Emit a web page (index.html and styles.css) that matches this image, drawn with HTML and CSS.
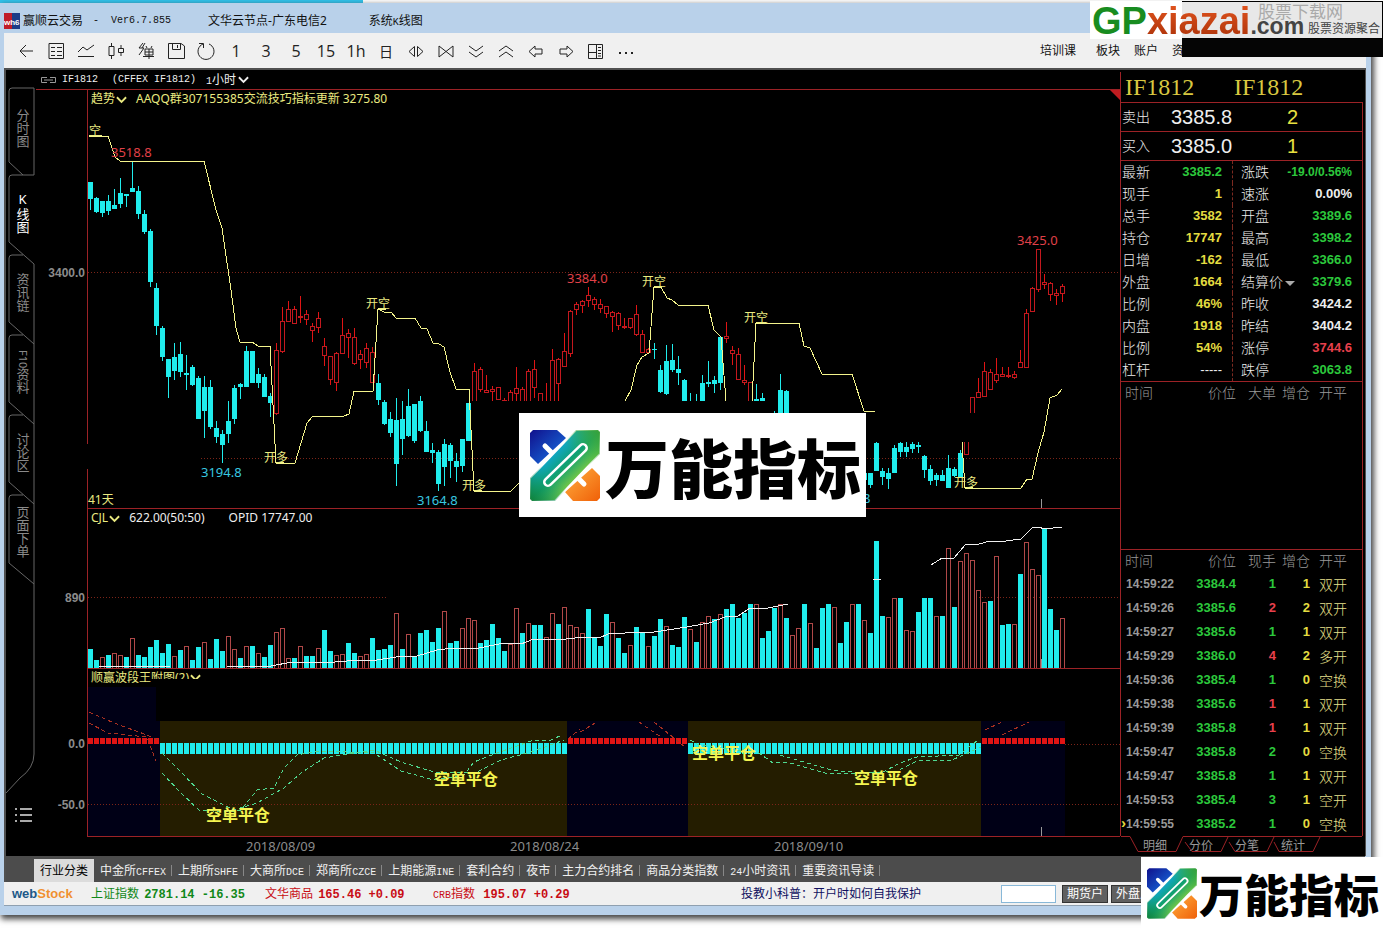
FILE: index.html
```html
<!DOCTYPE html>
<html lang="zh-CN">

<head>
    <meta charset="utf-8" />
    <title>赢顺云交易</title>
    <link rel="stylesheet" href="styles.css">
</head>

<body>
    <svg class="defs" width="0" height="0">
        <defs>
            <linearGradient id="gBlue" x1="0" y1="0" x2="1" y2="1">
                <stop offset="0" stop-color="#10108c" />
                <stop offset="1" stop-color="#1878e8" />
            </linearGradient>
            <linearGradient id="gBand" gradientUnits="userSpaceOnUse" x1="20" y1="20" x2="54" y2="54">
                <stop offset="0" stop-color="#10a8e0" />
                <stop offset=".45" stop-color="#10a070" />
                <stop offset="1" stop-color="#a8dc30" />
            </linearGradient>
            <linearGradient id="gBand2" gradientUnits="userSpaceOnUse" x1="0" y1="71" x2="70" y2="0">
                <stop offset="0" stop-color="#108038" />
                <stop offset=".35" stop-color="#10a070" stop-opacity="0" />
                <stop offset=".65" stop-color="#40b840" stop-opacity="0" />
                <stop offset="1" stop-color="#38a038" />
            </linearGradient>
            <linearGradient id="gOrange" x1="0" y1="0" x2="1" y2="1">
                <stop offset="0" stop-color="#ffb040" />
                <stop offset="1" stop-color="#f06008" />
            </linearGradient>
            <symbol id="logo" viewBox="0 0 70 71">
                <path fill="url(#gBlue)" d="M0 3 3 0H27L36 8 8 34 0 26Z" />
                <path stroke="#fff" stroke-width="5" stroke-linecap="round" d="M15 16 25 26" />
                <path fill="url(#gOrange)" d="M62 38 70 46V68L67 71H43L35 62Z" />
                <path stroke="#fff" stroke-width="5" stroke-linecap="round" d="M46 46 54 54" />
                <path fill="url(#gBand)" stroke="#fff" stroke-width="2" d="M46 0H68L70 2V24L25 71H2L0 69V48Z" />
                <path fill="url(#gBand2)" d="M46 0H68L70 2V24L25 71H2L0 69V48Z" />
                <path stroke="#fff" stroke-width="10" stroke-linecap="round" d="M18 52 53 18" />
                <path stroke="url(#gBand)" stroke-width="5" stroke-linecap="round" d="M18 52 53 18" />
            </symbol>
            <symbol id="down" viewBox="0 0 12 8">
                <path fill="none" stroke="currentColor" stroke-width="2" d="M1 1 6 6 11 1" />
            </symbol>
        </defs>
    </svg>

    <div class="window">
        <header class="titlebar">
            <svg class="app-icon" width="16" height="16">
                <rect width="9" height="16" fill="#c01c28" />
                <rect x="8" width="8" height="16" fill="#1c3c88" />
                <text x="0" y="12">wh6</text>
            </svg>
            <span class="t-name">赢顺云交易</span>
            <span class="t-ver en">-  Ver6.7.855</span>
            <span class="t-node">文华云节点-广东电信2</span>
            <span>系统<i class="en">K</i>线图</span>
        </header>

        <nav class="toolbar">
            <button aria-label="返回"><svg><path d="M17 10H4M10 4 4 10 10 16" /></svg></button>
            <button aria-label="报价"><svg><path d="M3 2.500H17.500V17.500H3ZM5 6.500H9M11 6.500H16M5 10.500H9M11 10.500H16M5 14.500H9M11 14.500H16" /></svg></button>
            <button aria-label="分时"><svg><path d="M2 11 7 6 11 9 18 4M2 15.500H18" /></svg></button>
            <button aria-label="K线"><svg><path d="M3 5.500H8V14.500H3ZM5.500 2V5M5.500 15V18M12.500 7.500H17.500V11.500H12.500ZM15 4V7M15 12V15" /></svg></button>
            <button aria-label="闪电下单"><svg><path d="M7 2 3 7H8L3 14M9 2 6 7M9 8H17V14H9ZM9 11H17M13 8V18M7 15.500H18M10 5 11 7M16 5 15 7" /></svg></button>
            <button aria-label="保存"><svg><path d="M2.500 2.500H15L18.500 5V17.500H2.500ZM6.500 3V8.500H14.500V3M11.500 4V7" /></svg></button>
            <button aria-label="刷新"><svg><path d="M7 3A8 8 0 1 0 13 3M3 2.500H7.500V7" /></svg></button>
            <button>1</button>
            <button>3</button>
            <button>5</button>
            <button>15</button>
            <button>1h</button>
            <button class="cn">日</button>
            <button aria-label="放大"><svg><path d="M8.500 5.500V15.500L3 10.500ZM11.500 5.500V15.500L17 10.500Z" /></svg></button>
            <button aria-label="缩小"><svg><path d="M3 5V16L10 10.500ZM17 5V16L10 10.500Z" /></svg></button>
            <button aria-label="下"><svg><path d="M3 5 10 10 17 5M3 11 10 16 17 11" /></svg></button>
            <button aria-label="上"><svg><path d="M3 10 10 5 17 10M3 16 10 11 17 16" /></svg></button>
            <button aria-label="左移"><svg><path d="M3 10.500 9 5V8H16V13H9V16Z" /></svg></button>
            <button aria-label="右移"><svg><path d="M17 10.500 11 5V8H4V13H11V16Z" /></svg></button>
            <button aria-label="布局"><svg><path d="M2.500 3.500H16.500V17.500H2.500ZM10.500 4V17M3 11.500H10M12 6.500H15M12 9.500H15M12 12.500H15M12 15H15" /></svg></button>
            <button aria-label="更多"><svg class="dots"><path d="M3 12H5M9 12H11M15 12H17" /></svg></button>
            <div class="menu">
                <a href="#" class="first">培训课</a>
                <a href="#">板块</a>
                <a href="#">账户</a>
                <a href="#">资讯</a>
            </div>
        </nav>

        <main class="work">
            <aside class="side">
                <svg class="side-lines" width="30" height="786">
                    <path d="M3 92V21Q3 18 6 18H28V105H17L3 92M3 172V108Q3 105 6 105H17M3 172 28 194V684Q28 698 14 708L0 723" />
                    <path d="M3 252V188Q3 185 6 185H17M3 252 28 274M3 332V268Q3 265 6 265H17M3 332 28 354M3 412V348Q3 345 6 345H17M3 412 28 434M3 493V428Q3 425 6 425H17M3 493 28 514" />
                    <path class="list" d="M9 739H11M14 739H26M9 745H11M14 745H26M9 751H11M14 751H26" />
                </svg>
                <button class="side-tab top">分时图</button>
                <button class="side-tab on">K线图</button>
                <button class="side-tab">资讯链</button>
                <button class="side-tab"><i>F10</i>资料</button>
                <button class="side-tab">讨论区</button>
                <button class="side-tab">页面下单</button>
            </aside>

            <section class="charts">
                <div class="contract">
                    <svg width="17" height="8"><path d="M7 1.500H1.500V6.500H7M10 1.500H15.500V6.500H10M4 4H13" /></svg>
                    <span class="en">IF1812</span>
                    <span class="en full">(CFFEX IF1812)</span>
                    <span><i class="en">1</i>小时</span>
                    <svg class="arrow" width="11" height="8"><use href="#down" /></svg>
                </div>
                <div class="pane main-pane">
                    <div class="plot">
                        <div class="caption yellow">
                            <span>趋势</span><svg class="arrow" width="11" height="8"><use href="#down" /></svg>
                            <span class="val">AAQQ群307155385交流技巧指标更新 3275.80</span>
                        </div>
                        <svg id="price" class="canvas">
                            <line class="grid" x1="0" x2="100%" y1="182" y2="182" />
                            <line class="grid" x1="113" x2="100%" y1="368" y2="368" />
                            <g id="candles"></g>
                            <g class="trend">
                                <path d="M1 46 20 46 27 67 32 71 116 71 128 120 134 138 143 200 148 238 152 252 164 252 170 256 182 256 188 373 207 373 219 333 225 326 256 326 261 324 266 301 285 301 290 219 296 222 303 222 308 228 327 228 333 238 339 239 345 253 351 254 356 257 362 282 368 299 381 299 386 401 423 401 431 393" />
                                <path d="M537 311 543 300 549 275 554 267 561 263 566 197 573 197 579 208 584 210 590 215 620 215 626 240 633 247 638 311" />
                                <path d="M664 311 668 233 711 233 716 256 722 258 734 284 764 284 776 321 787 322" />
                                <path d="M874 352 877 398 933 398 939 389 944 389 950 363 956 342 962 308 969 305 974 299" />
                                <path class="mark" d="M1 46H14M188 373H196M290 219H298M386 401H394M566 197H574M668 233H678M877 398H885" />
                            </g>
                            <rect x="384" y="311" width="298" height="12" />
                            <rect x="777" y="323" width="135" height="29" />
                            <path class="tick" d="M953.500 409V418" />
                            <g class="axis">
                                <text x="-3" y="187">3400.0</text>
                            </g>
                            <g class="lbl yellow">
                                <text x="1" y="45">空</text>
                                <text x="278" y="218">开空</text>
                                <text x="176" y="372">开多</text>
                                <text x="374" y="400">开多</text>
                                <text x="554" y="196">开空</text>
                                <text x="656" y="232">开空</text>
                                <text x="866" y="397">开多</text>
                                <text x="0" y="414">41天</text>
                            </g>
                            <g class="lbl red">
                                <text x="23" y="67">3518.8</text>
                                <text x="479" y="193">3384.0</text>
                                <text x="929" y="155">3425.0</text>
                            </g>
                            <g class="lbl cyan">
                                <text x="113" y="387">3194.8</text>
                                <text x="329" y="415">3164.8</text>
                                <text x="775" y="413">8</text>
                            </g>
                        </svg>
                        <div class="brand big">
                            <svg width="70" height="71"><use href="#logo" /></svg>
                            <b>万能指标</b>
                        </div>
                    </div>
                </div>
                <div class="pane vol-pane">
                    <div class="plot">
                        <div class="caption">
                            <span class="yellow">CJL</span><svg class="arrow yellow" width="11" height="8"><use href="#down" /></svg>
                            <span class="val">622.00(50:50)</span>
                            <span class="val2">OPID 17747.00</span>
                        </div>
                        <svg class="canvas">
                            <line class="grid" x1="0" x2="298" y1="88" y2="88" />
                            <line class="grid" x1="891" x2="100%" y1="88" y2="88" />
                            <g id="volume"></g>
                            <g class="opid">
                                <path d="M11 158 83 157 139 157 183 157 204 153 236 154 259 152 289 151 308 148 329 147 349 141 366 139 391 139 416 134 433 135 446 130 469 131 496 128 511 129 520 125 537 124 566 123 599 118 621 114 637 108 650 107 662 99 680 99 700 95" />
                                <path d="M785 71 793 70M843 56 854 49 866 49 878 35 891 35 902 32 910 33 933 30 944 19 950 18 957 20 974 18" />
                            </g>
                            <path class="tick" d="M953.500 150V159" />
                            <g class="axis"><text x="-3" y="93">890</text></g>
                        </svg>
                    </div>
                </div>
                <div class="pane wave-pane">
                    <div class="plot">
                        <div class="caption yellow">
                            <span>顺赢波段王</span><span class="cut">附图(2)<svg class="arrow" width="11" height="8"><use href="#down" /></svg></span>
                        </div>
                        <svg class="canvas">
                            <g class="navy">
                                <rect x="0" y="18" width="68" height="149" />
                                <rect x="68" y="52" width="4" height="115" />
                                <rect x="479" y="52" width="121" height="115" />
                                <rect x="893" y="52" width="84" height="115" />
                            </g>
                            <g class="olive">
                                <rect x="72" y="52" width="407" height="115" />
                                <rect x="600" y="52" width="293" height="115" />
                            </g>
                            <line class="grid" x1="977" x2="100%" y1="75" y2="75" />
                            <line class="grid" x1="0" x2="100%" y1="135" y2="135" />
                            <g id="wave"></g>
                            <g class="dash hot">
                                <path d="M1 43 26 54 59 66 72 72M1 54 20 64 59 68 68 92M492 63 509 53M551 53 573 68M566 53 597 78M897 61 914 53M914 66 941 53M480 70 492 60" />
                            </g>
                            <g class="dash">
                                <path d="M74 84 93 103 114 125 146 141 169 134 196 119 213 104 236 89 286 81 313 93 346 103 363 104 389 103 413 91 443 83 476 71" />
                                <path d="M74 104 93 124 111 141 139 143 153 141 169 121 186 119 196 99 209 86 229 82 286 84 313 102 346 111 376 106 386 93 409 84 443 72 463 71 474 66" />
                                <path d="M602 71 611 76 671 84 685 94 699 93 740 105 785 104 809 102 831 91 864 91 893 78" />
                                <path d="M692 86 743 101 774 104 795 103 812 94 829 88 871 86 890 71" />
                            </g>
                            <g class="flat">
                                <text x="118" y="152">空单平仓</text>
                                <text x="346" y="116">空单平仓</text>
                                <text x="604" y="90">空单平仓</text>
                                <text x="766" y="115">空单平仓</text>
                            </g>
                            <path class="tick" d="M953.500 158V167" />
                            <g class="axis">
                                <text x="-3" y="79">0.0</text>
                                <text x="-3" y="140">-50.0</text>
                            </g>
                        </svg>
                    </div>
                </div>
                <div class="dates"><span>2018/08/09</span><span>2018/08/24</span><span>2018/09/10</span></div>
            </section>

            <aside class="quote">
                <div class="q-head"><span>IF1812</span><span>IF1812</span></div>
                <div class="q-bid"><span>卖出</span><b>3385.8</b><em>2</em></div>
                <div class="q-bid"><span>买入</span><b>3385.0</b><em>1</em></div>
                <table class="q-data">
                    <tr><th>最新</th><td class="g">3385.2</td><th>涨跌</th><td class="g">-19.0/0.56%</td></tr>
                    <tr><th>现手</th><td class="y">1</td><th>速涨</th><td>0.00%</td></tr>
                    <tr><th>总手</th><td class="y">3582</td><th>开盘</th><td class="g">3389.6</td></tr>
                    <tr><th>持仓</th><td class="y">17747</td><th>最高</th><td class="g">3398.2</td></tr>
                    <tr><th>日增</th><td class="y">-162</td><th>最低</th><td class="g">3366.0</td></tr>
                    <tr><th>外盘</th><td class="y">1664</td><th>结算价<i class="tri"></i></th><td class="g">3379.6</td></tr>
                    <tr><th>比例</th><td class="y">46%</td><th>昨收</th><td>3424.2</td></tr>
                    <tr><th>内盘</th><td class="y">1918</td><th>昨结</th><td>3404.2</td></tr>
                    <tr><th>比例</th><td class="y">54%</td><th>涨停</th><td class="r">3744.6</td></tr>
                    <tr><th>杠杆</th><td class="none">-----</td><th>跌停</th><td class="g">3063.8</td></tr>
                </table>
                <div class="q-big">
                    <table class="ticks">
                        <tr><th>时间</th><th>价位</th><th>大单</th><th>增仓</th><th>开平</th></tr>
                    </table>
                </div>
                <table class="ticks">
                    <tr><th>时间</th><th>价位</th><th>现手</th><th>增仓</th><th>开平</th></tr>
                    <tr><td>14:59:22</td><td>3384.4</td><td>1</td><td>1</td><td>双开</td></tr>
                    <tr><td>14:59:26</td><td>3385.6</td><td class="r">2</td><td>2</td><td>双开</td></tr>
                    <tr><td>14:59:27</td><td>3385.6</td><td>1</td><td>1</td><td>双开</td></tr>
                    <tr><td>14:59:29</td><td>3386.0</td><td class="r">4</td><td>2</td><td>多开</td></tr>
                    <tr><td>14:59:36</td><td>3385.4</td><td>1</td><td>0</td><td>空换</td></tr>
                    <tr><td>14:59:38</td><td>3385.6</td><td class="r">1</td><td>1</td><td>双开</td></tr>
                    <tr><td>14:59:39</td><td>3385.8</td><td class="r">1</td><td>1</td><td>双开</td></tr>
                    <tr><td>14:59:47</td><td>3385.8</td><td>2</td><td>0</td><td>空换</td></tr>
                    <tr><td>14:59:47</td><td>3385.8</td><td>1</td><td>1</td><td>双开</td></tr>
                    <tr><td>14:59:53</td><td>3385.4</td><td>3</td><td>1</td><td>空开</td></tr>
                    <tr class="now"><td>14:59:55</td><td>3385.2</td><td>1</td><td>0</td><td>空换</td></tr>
                </table>
                <div class="q-tabs">
                    <svg width="241" height="17"><path d="M0 .5H9L17 15.500H55L62 .5H241M64 6 71 15.500H100L107 1M108 6 114 15.500H146L153 1M153 6 158 15.500H192L199 1" /></svg>
                    <button>明细</button><button>分价</button><button>分笔</button><button>统计</button>
                </div>
            </aside>
        </main>

        <nav class="markets">
            <button class="on">行业分类</button>
            <button>中金所<i class="en">CFFEX</i></button>
            <button>上期所<i class="en">SHFE</i></button>
            <button>大商所<i class="en">DCE</i></button>
            <button>郑商所<i class="en">CZCE</i></button>
            <button>上期能源<i class="en">INE</i></button>
            <button>套利合约</button>
            <button>夜市</button>
            <button>主力合约排名</button>
            <button>商品分类指数</button>
            <button><i class="en">24</i>小时资讯</button>
            <button>重要资讯导读</button>
        </nav>

        <footer class="status">
            <span class="webstock">web<em>Stock</em></span>
            <span class="idx down">上证指数 <b>2781.14 -16.35</b></span>
            <span class="idx up">文华商品 <b>165.46 +0.09</b></span>
            <span class="idx up last"><i class="en">CRB</i>指数  <b>195.07 +0.29</b></span>
            <a href="#">投教小科普：开户时如何自我保护</a>
            <div class="account">
                <input type="text" aria-label="账户">
                <button>期货户</button>
                <button>外盘户</button>
            </div>
        </footer>
    </div>

    <div class="site">
        <div class="shade"></div>
        <span class="word"><b class="gp">GP</b><b class="xz">xiazai</b><b class="com">.com</b></span>
        <span class="site-cn">股票下载网</span>
        <span class="site-sub">股票资源聚合</span>
    </div>
    <div class="brand small">
        <svg width="50" height="51"><use href="#logo" /></svg>
        <b>万能指标</b>
    </div>

    <script src="script.js"></script>
</body>

</html>
```

FILE: styles.css
```css
body {
    margin: 0;
    padding-top: 3px;
    background: linear-gradient(90deg, #2fc4ee 363px, #fff 363px) no-repeat;
    background-size: 100% 3px;
    background-color: #fff;
    font: 12px/16px "Noto Sans", "Noto Sans CJK SC", sans-serif;
    min-height: 100vh;
    box-sizing: border-box;
    position: relative;
    overflow: hidden;
}
i, em {
    font-style: normal;
}
button {
    margin: 0;
    padding: 0;
    border: 0;
    background: none;
    font: inherit;
    color: inherit;
}
a {
    color: inherit;
    text-decoration: none;
}
table {
    border-collapse: separate;
    border-spacing: 0;
    table-layout: fixed;
    width: 100%;
    box-sizing: border-box;
}
th, td {
    padding: 0;
    font-weight: normal;
    box-sizing: border-box;
}
.defs {
    position: absolute;
}
.en {
    font-family: "Liberation Mono", monospace;
    font-size: 10px;
    line-height: 10px;
}
.window {
    margin-right: 13px;
    padding: 0 5px 9px 4px;
    background: #b9d1ea;
    box-shadow: 2px 3px 6px 1px #444;
}

/* title + toolbar */
.titlebar {
    height: 30px;
    padding-top: 5px;
    box-sizing: border-box;
    display: flex;
    align-items: center;
    white-space: pre;
    color: #111;
}
.app-icon {
    margin-right: 3px;
}
.app-icon text {
    font: bold 8px "Liberation Sans", sans-serif;
    fill: #fff;
}
.t-name {
    margin-right: 10px;
}
.t-ver {
    margin-right: 37px;
}
.t-node {
    margin-right: 42px;
}
.toolbar {
    height: 35px;
    background: #f0f0f0;
    display: flex;
    align-items: center;
    padding-left: 7px;
}
.toolbar button {
    width: 30px;
    height: 30px;
    font: 16px/30px "Open Sans", sans-serif;
    color: #222;
}
.toolbar button.cn {
    font: 14px/30px "Noto Sans CJK SC", sans-serif;
}
.toolbar svg {
    width: 20px;
    height: 20px;
    display: block;
    margin: 0 auto;
    fill: none;
    stroke: #222;
}
.toolbar .dots {
    stroke-width: 2;
}
.menu {
    margin-left: auto;
    padding-right: 170px;
    display: flex;
    gap: 14px;
    color: #111;
}
.menu .first {
    margin-right: 6px;
}

/* work area */
.work {
    display: flex;
    background: #000;
    border: solid #505050;
    border-width: 2px 1px 0 2px;
    color: #eee;
}
.side {
    width: 30px;
    padding-top: 18px;
    position: relative;
    box-sizing: border-box;
}
.side-lines {
    position: absolute;
    left: 0;
    top: 0;
    fill: none;
    stroke: #666;
}
.side-lines .list {
    stroke: #aaa;
    stroke-width: 2;
}
.side-tab {
    display: flex;
    align-items: center;
    justify-content: center;
    width: 33px;
    height: 80px;
    font-size: 13px;
    line-height: 14px;
    color: #8a8a8a;
    writing-mode: vertical-rl;
    text-orientation: upright;
}
.side-tab.top {
    height: 84px;
    padding-bottom: 4px;
}
.side-tab.on {
    color: #fff;
}
.side-tab i {
    text-orientation: mixed;
    font-size: 11px;
}
.charts {
    flex: 1;
    min-width: 0;
}
.contract {
    height: 19px;
    padding-left: 4px;
    display: flex;
    align-items: center;
    white-space: pre;
}
.contract svg {
    fill: none;
    stroke: #999;
    margin-right: 5px;
}
.contract .full {
    margin: 0 10px 0 14px;
}
.contract .arrow {
    margin: 0 0 0 2px;
}
.pane {
    border-top: 1px solid #9c2226;
}
.plot {
    position: relative;
    margin-left: 51px;
    border-left: 1px solid #9c2226;
}
.vol-pane, .wave-pane {
    border: 0;
}
.vol-pane .plot, .wave-pane .plot {
    border-top: 1px solid #9c2226;
}
.main-pane .plot::before {
    content: "";
    position: absolute;
    left: -1px;
    top: 354px;
    width: 1px;
    height: 25px;
    background: #000;
}
.main-pane .plot::after {
    content: "";
    position: absolute;
    right: 0;
    top: 0;
    border: 5px solid #c01c20;
    border-left-color: transparent;
    border-bottom-color: transparent;
}
.canvas {
    display: block;
    width: 100%;
    overflow: visible;
}
.main-pane .canvas {
    height: 418px;
}
.vol-pane .canvas {
    height: 159px;
}
.wave-pane .plot {
    border-bottom: 1px solid #9c2226;
}
.wave-pane .canvas {
    height: 167px;
}
.caption {
    position: absolute;
    left: 3px;
    top: 0;
    display: flex;
    align-items: center;
    height: 17px;
    line-height: 17px;
    white-space: pre;
}
.caption .arrow {
    margin: 3px 0 0 1px;
    flex: none;
}
.caption .val {
    margin-left: 9px;
}
.caption .val2 {
    margin-left: 24px;
}
.caption .cut {
    height: 10px;
    line-height: 17px;
    align-self: flex-start;
    overflow: hidden;
}
.yellow {
    color: #eaea80;
    fill: #eaea80;
}
.red {
    fill: #e04048;
}
.cyan {
    fill: #38c8e0;
}
.grid {
    stroke: #7c2418;
    stroke-dasharray: 1 2;
    shape-rendering: crispEdges;
}
.tick {
    stroke: #999;
}
.lbl {
    font-size: 12px;
}
.lbl.red, .lbl.cyan {
    font-size: 13px;
}
.axis {
    font: bold 12px "Liberation Sans", sans-serif;
    fill: #8c8c8c;
    text-anchor: end;
}
.trend, .opid, .dash {
    fill: none;
    stroke: #f4f48c;
    shape-rendering: crispEdges;
}
.trend .mark {
    stroke-width: 2;
}
.opid {
    stroke: #f0f0f0;
}
.dash {
    stroke: #50d890;
    stroke-dasharray: 4 3;
}
.dash.hot {
    stroke: #a83020;
}
.bar {
    shape-rendering: crispEdges;
}
.fall {
    fill: #20ecec;
}
.rise {
    fill: none;
    stroke: #c4181e;
}
.rise.wick, .wave-up {
    fill: #e01414;
    stroke: none;
}
#volume .rise {
    stroke: #b04848;
}
.navy {
    fill: #000016;
}
.olive {
    fill: #241d00;
}
.flat {
    font-size: 16px;
    font-weight: bold;
    fill: #f4f450;
}
.dates {
    display: flex;
    height: 19px;
    line-height: 19px;
    padding-left: 210px;
    font-size: 13px;
    color: #8c8c8c;
}
.dates span {
    flex: 0 0 264px;
}

/* quote panel */
.quote {
    width: 243px;
    margin: 2px 2px 0 0;
    flex: none;
    box-sizing: border-box;
    font-size: 14px;
}
.q-head, .q-bid, .q-data, .q-big, .ticks {
    border: 1px solid #9c2226;
    border-width: 0 1px 1px;
}
.q-head {
    display: flex;
    padding-left: 4px;
    font: 24px/30px "Liberation Serif", serif;
    color: #d8c840;
    border-right: 0;
}
.q-head span {
    width: 109px;
}
.q-bid {
    display: flex;
    align-items: center;
    height: 28px;
    padding-left: 1px;
}
.q-bid span {
    flex: 0 0 49px;
    font-weight: 300;
}
.q-bid b {
    flex: 0 0 116px;
}
.q-bid b, .q-bid em {
    font: 20px "Liberation Sans", sans-serif;
}
.q-bid em {
    color: #e8e040;
}
.q-data th {
    height: 22px;
    line-height: 20px;
    text-align: left;
    font-weight: 300;
    padding-left: 1px;
    width: 44px;
    white-space: nowrap;
}
.q-data th:nth-child(3) {
    padding-left: 8px;
    width: 53px;
    border-left: 1px dashed #7c2a20;
}
.q-data td {
    font: bold 13px/20px "Liberation Sans", sans-serif;
    text-align: right;
    padding-right: 10px;
}
.q-data td:nth-child(2) {
    width: 67px;
}
.q-data tr:first-child td:last-child {
    font-size: 12px;
}
.q-data .none {
    font-weight: normal;
}
.tri {
    display: inline-block;
    border: 5px solid transparent;
    border-top-color: #aaa;
    border-bottom: 0;
    margin-left: 2px;
    vertical-align: 1px;
}
.g {
    color: #2cc83c;
}
.y {
    color: #e4dc40;
}
.q-data .r, .ticks .r {
    color: #e8404c;
}
.q-big {
    height: 167px;
}
.q-big .ticks {
    border: 0;
}
.ticks {
    border-bottom: 0;
}
.ticks th {
    height: 22px;
    line-height: 22px;
    color: #999;
    font-weight: 300;
    text-align: right;
    width: 40px;
}
.ticks th:first-child {
    width: 59px;
    padding-left: 4px;
    text-align: left;
}
.ticks th:nth-child(2) {
    width: 56px;
}
.ticks th:nth-child(4) {
    width: 34px;
}
.ticks th:last-child {
    width: auto;
    text-align: left;
    padding-left: 9px;
}
.ticks td {
    height: 24px;
    font: bold 13px/24px "Liberation Sans", sans-serif;
    text-align: right;
    color: #2cc83c;
}
.ticks td:first-child {
    font-size: 12px;
    color: #999;
    text-align: left;
    padding-left: 5px;
    position: relative;
}
.ticks td:nth-child(4) {
    color: #e4dc40;
}
.ticks td:last-child {
    font: 300 14px/22px "Noto Sans CJK SC", sans-serif;
    color: #e8e08c;
    text-align: left;
    padding-left: 9px;
}
.now td:first-child::before {
    content: "›";
    position: absolute;
    left: 0;
    top: -1px;
    font-size: 15px;
    color: #e4dc40;
}
.q-tabs {
    position: relative;
    display: flex;
    gap: 22px;
    padding-left: 23px;
    height: 18px;
    font-size: 12px;
    line-height: 15px;
    color: #999;
}
.q-tabs svg {
    position: absolute;
    left: 1px;
    top: 0;
    fill: none;
    stroke: #9c2226;
}

/* bottom bars */
.markets {
    display: flex;
    height: 26px;
    padding-left: 28px;
    background: #4c4c4c;
    color: #f0f0f0;
    border-left: 2px solid #505050;
    margin-right: 1px;
}
.markets button {
    position: relative;
    padding: 3px 6px 0;
    white-space: nowrap;
}
.markets button::after {
    content: "";
    position: absolute;
    right: 0;
    top: 9px;
    height: 11px;
    border-right: 1px solid #888;
}
.markets .on {
    margin-top: 3px;
    padding-top: 0;
    background: #dcdcdc;
    color: #000;
}
.markets .on::after {
    display: none;
}
.status {
    display: flex;
    align-items: center;
    height: 23px;
    background: #f0f0f0;
    border-bottom: 1px solid #8fa0b0;
    padding-left: 8px;
    white-space: pre;
}
.webstock {
    width: 79px;
    font: bold 13px "Liberation Sans", sans-serif;
    color: #205888;
}
.webstock em {
    color: #f09030;
}
.idx {
    width: 174px;
}
.idx b {
    font: bold 12px/12px "Liberation Mono", monospace;
    margin-left: 2px;
}
.idx.up {
    color: #c80c14;
    width: 168px;
}
.idx.last {
    width: 308px;
}
.down {
    color: #108818;
}
.status a {
    color: #101060;
}
.account {
    display: flex;
    gap: 3px;
    margin-left: auto;
    padding-right: 209px;
}
.account input {
    width: 55px;
    height: 18px;
    box-sizing: border-box;
    border: 1px solid #88b8d8;
    background: #fff;
    margin: 0 3px 0 0;
}
.account button {
    background: #606060;
    border: 1px solid #333;
    color: #fff;
    width: 46px;
    height: 18px;
    line-height: 14px;
}

/* stamps */
.brand {
    position: absolute;
    display: flex;
    align-items: center;
    background: #fff;
    color: #000;
    white-space: nowrap;
    box-sizing: border-box;
}
.brand svg {
    fill: none;
    flex: none;
}
.brand b {
    font-family: "Noto Sans CJK SC", sans-serif;
    font-weight: 900;
}
.big {
    left: 431px;
    top: 323px;
    width: 347px;
    height: 104px;
    padding-left: 11px;
    z-index: 2;
}
.big b {
    font-size: 64px;
    line-height: 96px;
    margin-left: 5px;
}
.small {
    right: 0;
    bottom: 0;
    width: 243px;
    height: 73px;
    padding-left: 6px;
}
.small b {
    font-size: 45px;
    line-height: 64px;
    margin-left: 2px;
}
.site {
    position: absolute;
    right: 1px;
    top: 1px;
    width: 293px;
    height: 38px;
    background: #fff;
    font-family: "Liberation Sans", "Noto Sans CJK SC", sans-serif;
}
.shade {
    position: absolute;
    right: 0;
    top: 0;
    width: 201px;
    height: 38px;
    box-sizing: border-box;
    border: 1px solid #000;
    border-left: 0;
    background: #e8e8e8;
    box-shadow: 0 18px #050505;
}
.word {
    position: absolute;
    left: 2px;
    top: 0;
    line-height: 40px;
    white-space: nowrap;
}
.gp, .xz {
    font-size: 38px;
}
.gp {
    color: #188c20;
}
.xz {
    background: linear-gradient(#e85820, #a83008);
    background-clip: text;
    color: transparent;
}
.com {
    font-size: 23px;
    color: #444;
}
.site-cn {
    position: absolute;
    left: 168px;
    top: 2px;
    font-size: 17px;
    line-height: 20px;
    color: #aaa;
}
.site-sub {
    position: absolute;
    left: 218px;
    top: 20px;
    font-size: 12px;
    color: #444;
}
```

FILE: script.js
```js
var NS = 'http://www.w3.org/2000/svg';

function rect(parent, x, y, w, h, cls) {
    var r = document.createElementNS(NS, 'rect');
    r.setAttribute('x', x);
    r.setAttribute('y', y);
    r.setAttribute('width', w);
    r.setAttribute('height', h);
    r.setAttribute('class', 'bar ' + cls);
    parent.appendChild(r);
}

// high, body top, body bottom, low
var groups = [
    { from: 0, up: false, bars: '92,92,109,120 107,108,122,123 111,111,123,127 105,111,121,125 99,115,119,119 88,103,114,118 104,104,106,117 71,98,102,102 96,101,124,129 120,124,142,144 139,141,192,197 193,198,236,245 236,238,267,271 269,269,287,308 253,267,281,290 252,264,282,287 265,283,285,300 275,277,295,296 286,288,329,329 286,297,321,348 290,297,337,339 331,338,347,353 340,344,355,373 311,331,344,353 295,298,329,334 293,294,297,309 256,261,297,297 261,261,293,293 278,284,293,298 284,287,307,307 303,306,313,327' },
    { from: 31, up: true, bars: '253,260,323,325 217,231,261,263 211,219,231,232 216,219,233,234 206,226,227,233 220,224,229,235 233,236,240,252 222,228,237,243 248,256,265,276 266,266,289,295 262,263,292,301 228,245,263,263 239,243,247,268 238,247,273,275 260,264,269,279 253,258,272,278 257,262,292,292' },
    { from: 48, up: false, bars: '284,293,310,315 310,312,334,335 322,329,343,347 308,330,374,396 311,329,349,365 299,316,346,347 314,314,351,353 306,311,341,342 331,341,362,362 353,360,363,373 360,362,394,401 349,354,377,396 353,355,371,388 363,371,377,392 349,349,376,382 313,313,351,351' },
    { from: 64, up: true, bars: '273,281,320,320 277,279,299,302 285,300,302,303 296,299,301,311 297,297,309,309 308,310,320,320 300,302,320,320 277,298,303,311 297,299,320,320 279,281,320,320 270,279,297,308 303,303,320,320 293,311,320,320 259,270,320,320 268,269,293,320 243,261,276,276 220,221,263,267 212,214,219,225 210,211,215,223 197,205,210,217 207,209,214,220 209,214,218,223 216,216,223,228 221,222,226,242 222,223,235,240 228,236,237,239 228,228,237,239 215,224,244,246 240,244,262,262 258,259,262,264' },
    { from: 94, up: false, bars: '253,259,260,269 275,280,302,303 255,271,304,305 254,270,280,282 266,279,283,295 289,290,320,320 303,312,320,320 304,312,320,320 285,293,320,320 271,292,294,297 286,290,294,303 247,247,293,300' },
    { from: 106, up: true, bars: '232,246,248,253 256,260,263,275 258,264,289,290 275,290,292,295 292,292,320,320' },
    { from: 111, up: false, bars: '294,309,311,311 303,308,311,311 312,324,330,330 321,324,330,330 284,300,330,330 300,301,330,330' },
    { from: 129, up: false, bars: '383,383,390,390 383,383,395,398 352,353,381,381 378,381,387,395 378,383,389,399 355,358,383,383 352,353,362,367 352,357,362,367 352,354,359,363 352,355,357,363 365,366,380,388 375,379,391,395 383,385,390,396 380,385,391,391 365,378,398,398 377,379,386,387 360,363,387,387' },
    { from: 146, up: true, bars: '345,345,364,364 307,307,345,345 288,302,307,308 272,281,306,306 279,282,299,300 268,284,290,293 277,284,286,287 277,285,286,288 281,284,287,289 260,272,277,278 219,223,277,277 197,198,221,221 159,159,199,202 184,192,194,199 192,193,204,211 199,203,205,215 194,196,203,212' }
];

var candles = document.getElementById('candles');
groups.forEach(function (g) {
    g.bars.split(' ').forEach(function (s, n) {
        var v = s.split(',').map(Number);
        var x = (g.from + n) * 6;
        if (g.up) {
            rect(candles, x + 2, v[0], 1, v[1] - v[0], 'rise wick');
            rect(candles, x + 2, v[2], 1, v[3] - v[2], 'rise wick');
            rect(candles, x + 0.5, v[1] + 0.5, 4, Math.max(v[2] - v[1], 1), 'rise');
        } else {
            rect(candles, x + 2, v[0], 1, v[3] - v[0], 'fall');
            rect(candles, x, v[1], 5, Math.max(v[2] - v[1], 1), 'fall');
        }
    });
});

// negative = rising bar
var vol = [
    19, 8, -11, 13, -15, -13, 11, -30, 13, 11, 21, 28, 15, 24, -12, 18, -22, 8, 21, -26,
    9, 29, 17, -32, -19, 10, -22, 22, -15, 11, 23, -36, -40, -10, 10, -22, 12, 12, -20, 38,
    17, -13, -14, 25, 15, -12, -14, 30, 18, 19, 23, -55, 19, -34, 11, 35, 38, 26, 40, -57,
    25, 27, -40, -50, -48, 25, 28, 44, 30, 17, -24, -60, 35, -45, 43, 43, -31, -55, 44, -61,
    -43, -41, -35, 59, 30, 22, 54, -46, 30, 15, -23, 41, 35, -22, 32, 49, -42, 23, 21, 51,
    -39, 26, -46, -52, 49, -54, 59, 64, 50, 55, 64, -64, 30, 37, 60, -64, 50, -33, -40, 64,
    -45, 20, 60, 64, -61, 25, 46, -64, 64, -48, 35, 127, 52, -51, -70, 70, -38, -37, 56, 70,
    70, -52, 52, -120, 61, -107, -115, -108, -78, -66, 67, -112, 43, 44, -44, 94, -126, -99, -93, 140,
    59, 38, -50
];
var volume = document.getElementById('volume');
vol.forEach(function (v, i) {
    if (v < 0) rect(volume, i * 6 + 0.5, 159.5 + v, 4, -v, 'rise');
    else rect(volume, i * 6, 159 - v, 5, v, 'fall');
});

var wave = document.getElementById('wave');
for (var i = 0; i < 163; i++) {
    var up = i < 12 || (i >= 80 && i < 100) || i > 148;
    if (up) rect(wave, i * 6, 69, 5, 6, 'wave-up');
    else rect(wave, i * 6, 74, 5, 11, 'fall');
}
```
